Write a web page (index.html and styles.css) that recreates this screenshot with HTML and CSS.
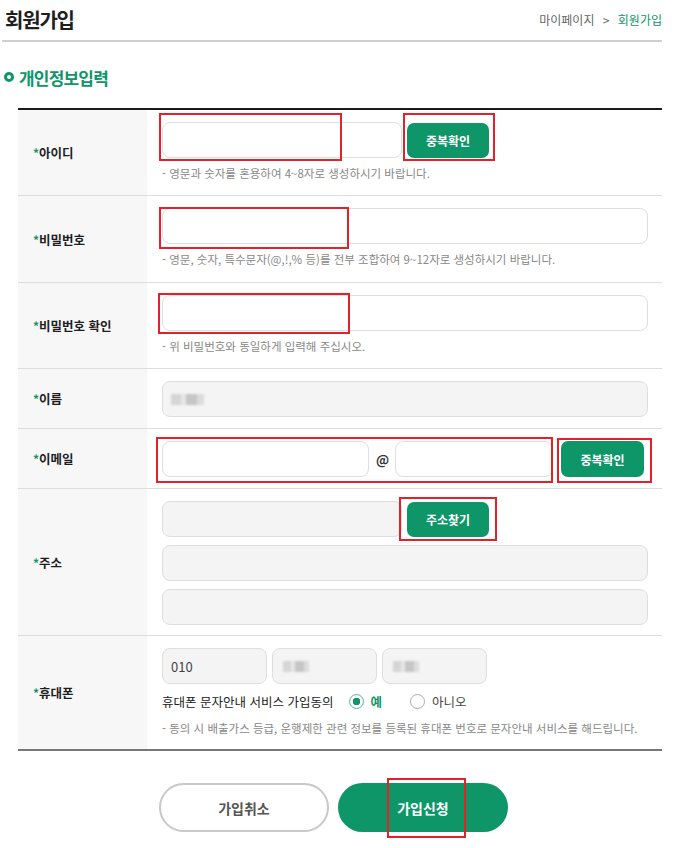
FILE: index.html
```html
<!DOCTYPE html>
<html lang="ko">
  <head>
    <meta charset="UTF-8" />
    <meta name="viewport" content="width=device-width, initial-scale=1.0" />
    <title>회원가입</title>
    <link rel="stylesheet" href="styles.css">
  </head>
  <body>
    <div class="page">
      <div class="page-head">
        <h1 class="page-title">회원가입</h1>
        <p class="crumbs">마이페이지 <span class="crumbs-sep">&gt;</span> <span class="crumbs-now">회원가입</span></p>
      </div>

      <h2 class="sec-title"><span class="sec-dot"></span>개인정보입력</h2>

      <div class="form-table">
        <div class="row row-tall">
          <div class="label"><span class="req">*</span>아이디</div>
          <div class="field">
            <div class="line">
              <input class="inp w-240" type="text">
              <button class="btn-sm" type="button">중복확인</button>
            </div>
            <p class="help">- 영문과 숫자를 혼용하여 4~8자로 생성하시기 바랍니다.</p>
          </div>
        </div>

        <div class="row row-tall row-pw">
          <div class="label"><span class="req">*</span>비밀번호</div>
          <div class="field">
            <input class="inp w-full" type="password">
            <p class="help">- 영문, 숫자, 특수문자(@,!,% 등)를 전부 조합하여 9~12자로 생성하시기 바랍니다.</p>
          </div>
        </div>

        <div class="row row-tall">
          <div class="label"><span class="req">*</span>비밀번호 확인</div>
          <div class="field">
            <input class="inp w-full" type="password">
            <p class="help">- 위 비밀번호와 동일하게 입력해 주십시오.</p>
          </div>
        </div>

        <div class="row">
          <div class="label"><span class="req">*</span>이름</div>
          <div class="field">
            <div class="inp inp-off w-full"><span class="blur blur-name"></span></div>
          </div>
        </div>

        <div class="row">
          <div class="label"><span class="req">*</span>이메일</div>
          <div class="field">
            <div class="line">
              <input class="inp w-207" type="text">
              <span class="at">@</span>
              <input class="inp w-158" type="text">
              <button class="btn-sm btn-mail" type="button">중복확인</button>
            </div>
          </div>
        </div>

        <div class="row row-addr">
          <div class="label"><span class="req">*</span>주소</div>
          <div class="field stack">
            <div class="line">
              <div class="inp inp-off w-240"></div>
              <button class="btn-sm" type="button">주소찾기</button>
            </div>
            <div class="inp inp-off w-full"></div>
            <div class="inp inp-off w-full"></div>
          </div>
        </div>

        <div class="row row-last">
          <div class="label"><span class="req">*</span>휴대폰</div>
          <div class="field">
            <div class="line">
              <div class="inp inp-off w-105">010</div>
              <div class="inp inp-off w-105"><span class="blur blur-num"></span></div>
              <div class="inp inp-off w-105"><span class="blur blur-num"></span></div>
            </div>
            <div class="agree">
              <span>휴대폰 문자안내 서비스 가입동의</span>
              <label class="radio radio-on"><span class="radio-mark"></span>예</label>
              <label class="radio"><span class="radio-mark"></span>아니오</label>
            </div>
            <p class="help help-sms">- 동의 시 배출가스 등급, 운행제한 관련 정보를 등록된 휴대폰 번호로 문자안내 서비스를 해드립니다.</p>
          </div>
        </div>
      </div>

      <div class="actions">
        <button class="btn-lg btn-cancel" type="button">가입취소</button>
        <button class="btn-lg btn-submit" type="button">가입신청</button>
      </div>

      <!-- review marks -->
      <span class="mark" style="left:159px;top:113px;width:183px;height:48px"></span>
      <span class="mark" style="left:403px;top:113px;width:92px;height:48px"></span>
      <span class="mark" style="left:159px;top:207px;width:190px;height:42px"></span>
      <span class="mark" style="left:158px;top:293px;width:192px;height:41px"></span>
      <span class="mark" style="left:156px;top:437px;width:397px;height:46px"></span>
      <span class="mark" style="left:557px;top:438px;width:95px;height:45px"></span>
      <span class="mark" style="left:399px;top:497px;width:98px;height:44px"></span>
      <span class="mark" style="left:387px;top:778px;width:79px;height:60px"></span>
    </div>
  </body>
</html>
```

FILE: styles.css
```css
*,
*::before,
*::after {
  box-sizing: border-box;
  margin: 0;
  padding: 0;
}

body {
  background-color: #fff;
  color: #222;
  font-family: "Noto Sans CJK KR", "Noto Sans", sans-serif;
}

.page {
  position: relative;
  width: 692px;
  min-height: 848px;
}

.page-head {
  display: flex;
  justify-content: space-between;
  align-items: center;
  width: 660px;
  height: 42px;
  margin-left: 2px;
  padding: 0 0 1px 3px;
  border-bottom: 2px solid #cfcfcf;
}

.page-title {
  font-size: 20px;
  font-weight: 700;
  letter-spacing: -1.2px;
  color: #1e1e1e;
}

.crumbs {
  font-size: 12px;
  color: #666;
}

.crumbs-sep {
  margin: 0 5px;
}

.crumbs-now {
  color: #0e9669;
}

.sec-title {
  display: flex;
  align-items: center;
  gap: 5px;
  margin: 23px 0 0 4px;
  height: 24px;
  font-size: 17px;
  font-weight: 700;
  letter-spacing: -0.8px;
  color: #0e9669;
}

.sec-dot {
  width: 10px;
  height: 10px;
  border: 3px solid #0e9669;
  border-radius: 50%;
}

.form-table {
  width: 644px;
  margin: 19px 0 0 18px;
  border-top: 2px solid #1b1b1b;
}

.row {
  display: grid;
  grid-template-columns: 129px 1fr;
  border-bottom: 1px solid #dcdcdc;
}

.row-last {
  border-bottom: 2px solid #777;
}

.label {
  display: flex;
  align-items: center;
  padding-left: 15px;
  background-color: #f7f7f7;
  font-size: 12.5px;
  font-weight: 700;
  color: #1e1e1e;
}

.req {
  color: #0e9669;
  font-size: 12px;
}

.field {
  padding: 12px 14px 11px 15px;
}

.row-tall .field {
  padding-bottom: 14px;
}

.row-pw .field {
  padding-bottom: 15px;
}

.row-addr .field {
  padding-bottom: 10px;
}

.row-last .field {
  padding-bottom: 13px;
}

.stack {
  display: flex;
  flex-direction: column;
  gap: 8px;
}

.line {
  display: flex;
  align-items: center;
  gap: 5px;
}

.inp {
  display: flex;
  align-items: center;
  height: 36px;
  padding: 0 8px;
  border: 1px solid #dedede;
  border-radius: 8px;
  background-color: #fff;
  font-family: inherit;
  font-size: 13px;
  color: #444;
  outline: none;
}

.inp-off {
  background-color: #f4f4f4;
}

.w-full { width: 100%; }
.w-240 { width: 240px; }
.w-207 { width: 207px; }
.w-158 { width: 158px; }
.w-105 { width: 105px; }

.at {
  width: 12px;
  margin: 0 2px 0 2px;
  font-size: 13px;
  font-weight: 700;
  color: #333;
}

.btn-sm {
  width: 82px;
  height: 35px;
  border: 0;
  border-radius: 7px;
  background-color: #0e9669;
  color: #fff;
  font-family: inherit;
  font-size: 12px;
  font-weight: 700;
}

.btn-mail {
  width: 83px;
  height: 36px;
  margin-left: 3px;
}

.help {
  margin-top: 7px;
  font-size: 11.5px;
  line-height: 16px;
  color: #888;
  white-space: nowrap;
}

.help-sms {
  margin-top: 10px;
}

.blur {
  display: block;
  height: 11px;
  background: linear-gradient(90deg, #d6d6d6 0 30%, #e6e6e6 30% 45%, #c6c6c6 45% 80%, #dcdcdc 80%);
  filter: blur(1px);
}

.blur-name {
  width: 33px;
}

.blur-num {
  width: 26px;
  margin-left: 2px;
}

.agree {
  display: flex;
  align-items: center;
  height: 18px;
  margin-top: 8px;
  font-size: 12.5px;
  color: #222;
}

.radio {
  display: flex;
  align-items: center;
  gap: 7px;
  margin-left: 15px;
  color: #444;
}

.radio + .radio {
  margin-left: 28px;
}

.radio-mark {
  width: 15px;
  height: 15px;
  border: 1px solid #aaa;
  border-radius: 50%;
  background-color: #fff;
}

.radio-on {
  color: #0e9669;
  font-weight: 700;
}

.radio-on .radio-mark {
  border-color: #4fb895;
  background: radial-gradient(circle, #0e9669 0 3.5px, #fff 4px);
}

.actions {
  display: flex;
  gap: 9px;
  margin-top: 32px;
  padding-left: 159px;
}

.btn-lg {
  width: 170px;
  height: 49px;
  border-radius: 25px;
  font-family: inherit;
  font-size: 14px;
  font-weight: 700;
}

.btn-cancel {
  border: 2px solid #c8c8c8;
  background-color: #fff;
  color: #555;
}

.btn-submit {
  border: 0;
  background-color: #0e9669;
  color: #fff;
}

.mark {
  position: absolute;
  border: 2px solid #e62028;
  pointer-events: none;
}
```
